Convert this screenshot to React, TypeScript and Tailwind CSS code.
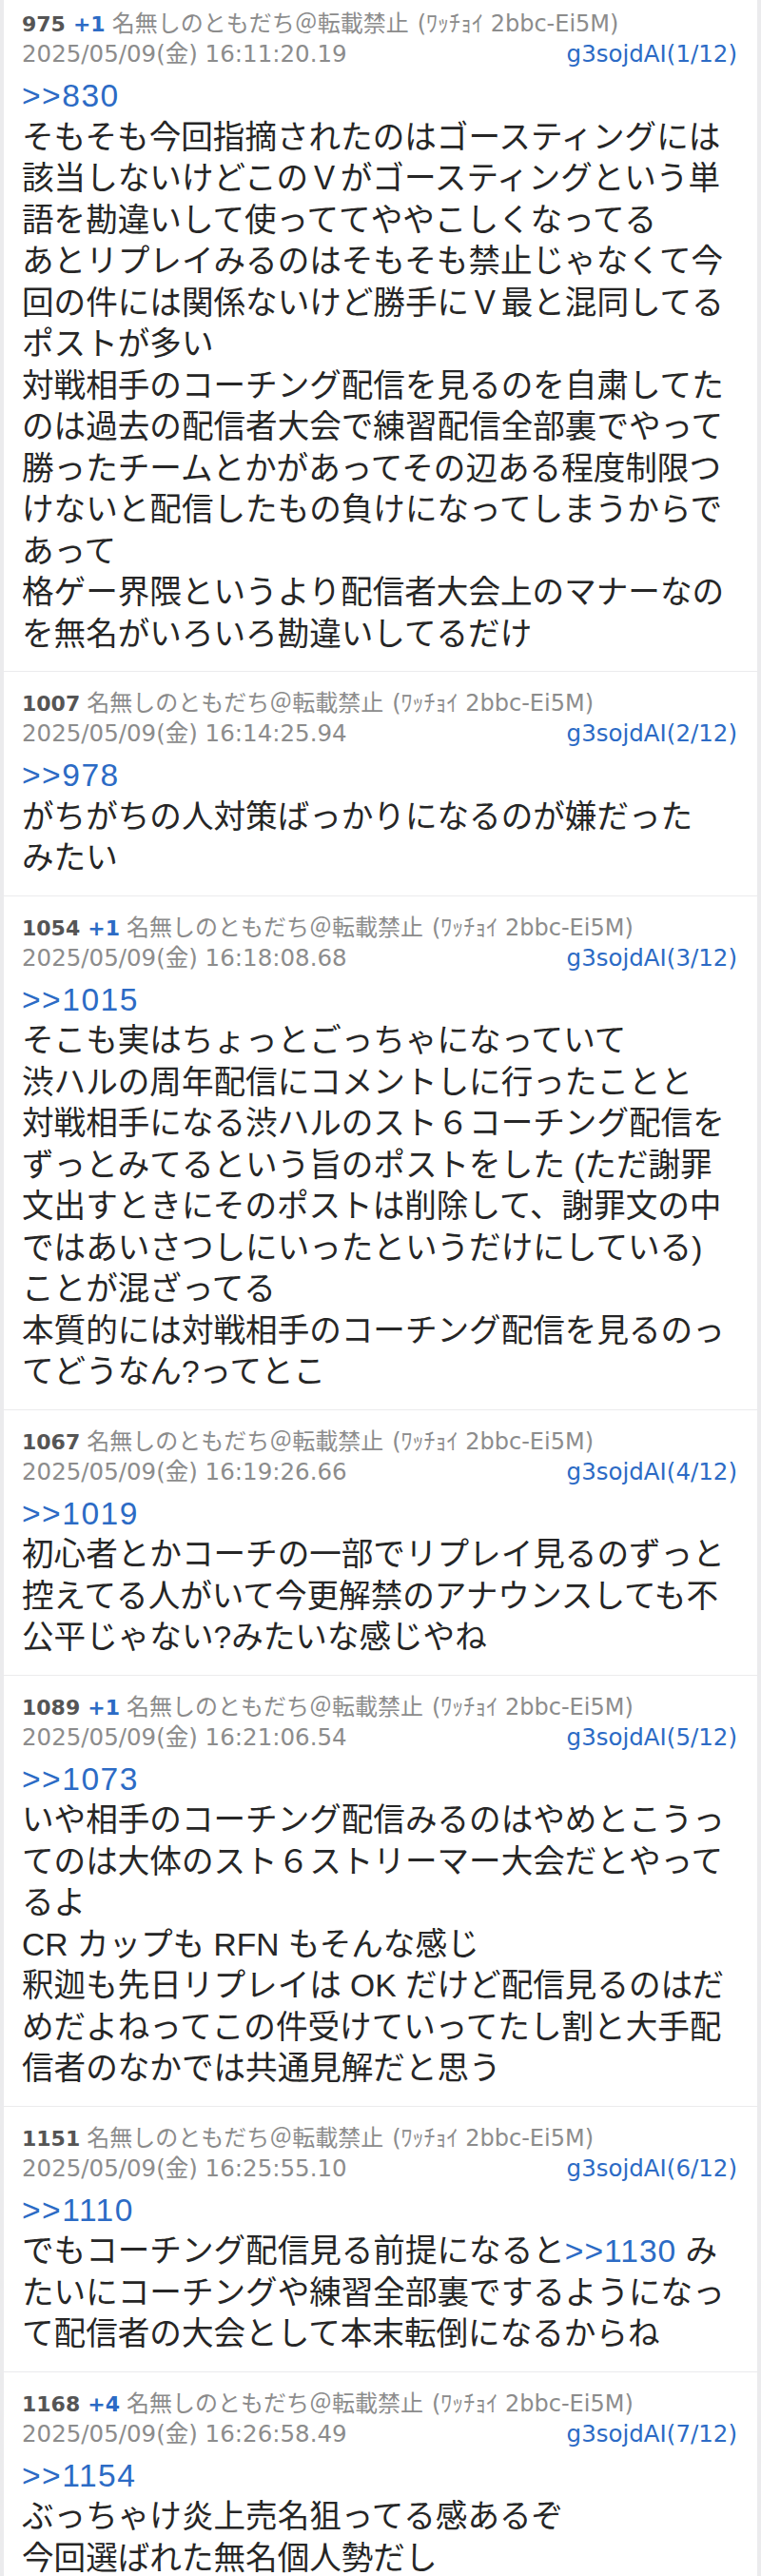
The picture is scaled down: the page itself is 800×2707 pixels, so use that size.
import React from "react";

type Post = {
  no: number;
  plus?: string;
  date: string;
  count: string;
  reply: string;
  lines: React.ReactNode[];
};

const link = "text-[#2c6bc5]";
const metaFont = { fontFamily: '"DejaVu Sans", "Noto Sans CJK JP", sans-serif' };

const posts: Post[] = [
  {
    no: 975,
    plus: "+1",
    date: "2025/05/09(金) 16:11:20.19",
    count: "1/12",
    reply: "830",
    lines: [
      "そもそも今回指摘されたのはゴースティングには",
      "該当しないけどこのＶがゴースティングという単",
      "語を勘違いして使っててややこしくなってる",
      "あとリプレイみるのはそもそも禁止じゃなくて今",
      "回の件には関係ないけど勝手にＶ最と混同してる",
      "ポストが多い",
      "対戦相手のコーチング配信を見るのを自粛してた",
      "のは過去の配信者大会で練習配信全部裏でやって",
      "勝ったチームとかがあってその辺ある程度制限つ",
      "けないと配信したもの負けになってしまうからで",
      "あって",
      "格ゲー界隈というより配信者大会上のマナーなの",
      "を無名がいろいろ勘違いしてるだけ",
    ],
  },
  {
    no: 1007,
    date: "2025/05/09(金) 16:14:25.94",
    count: "2/12",
    reply: "978",
    lines: ["がちがちの人対策ばっかりになるのが嫌だった", "みたい"],
  },
  {
    no: 1054,
    plus: "+1",
    date: "2025/05/09(金) 16:18:08.68",
    count: "3/12",
    reply: "1015",
    lines: [
      "そこも実はちょっとごっちゃになっていて",
      "渋ハルの周年配信にコメントしに行ったことと",
      "対戦相手になる渋ハルのスト６コーチング配信を",
      "ずっとみてるという旨のポストをした (ただ謝罪",
      "文出すときにそのポストは削除して、謝罪文の中",
      "ではあいさつしにいったというだけにしている)",
      "ことが混ざってる",
      "本質的には対戦相手のコーチング配信を見るのっ",
      "てどうなん?ってとこ",
    ],
  },
  {
    no: 1067,
    date: "2025/05/09(金) 16:19:26.66",
    count: "4/12",
    reply: "1019",
    lines: [
      "初心者とかコーチの一部でリプレイ見るのずっと",
      "控えてる人がいて今更解禁のアナウンスしても不",
      "公平じゃない?みたいな感じやね",
    ],
  },
  {
    no: 1089,
    plus: "+1",
    date: "2025/05/09(金) 16:21:06.54",
    count: "5/12",
    reply: "1073",
    lines: [
      "いや相手のコーチング配信みるのはやめとこうっ",
      "てのは大体のスト６ストリーマー大会だとやって",
      "るよ",
      "CR カップも RFN もそんな感じ",
      "釈迦も先日リプレイは OK だけど配信見るのはだ",
      "めだよねってこの件受けていってたし割と大手配",
      "信者のなかでは共通見解だと思う",
    ],
  },
  {
    no: 1151,
    date: "2025/05/09(金) 16:25:55.10",
    count: "6/12",
    reply: "1110",
    lines: [
      <>
        でもコーチング配信見る前提になると
        <span className={`${link} tracking-[1px]`}>&gt;&gt;1130</span> み
      </>,
      "たいにコーチングや練習全部裏でするようになっ",
      "て配信者の大会として本末転倒になるからね",
    ],
  },
  {
    no: 1168,
    plus: "+4",
    date: "2025/05/09(金) 16:26:58.49",
    count: "7/12",
    reply: "1154",
    lines: ["ぶっちゃけ炎上売名狙ってる感あるぞ", "今回選ばれた無名個人勢だし"],
  },
];

function PostCard({ post }: { post: Post }) {
  return (
    <div className="bg-white pt-[18px] pb-[17px] pl-[19px] pr-[21px]">
      <div
        className="whitespace-nowrap text-[24px] leading-[30px] text-[#8c8c8c]"
        style={metaFont}
      >
        <span className="text-[22px] font-bold text-[#555555]">{post.no}</span>
        {post.plus && (
          <span className={`ml-[8px] text-[22px] font-bold ${link}`}>{post.plus}</span>
        )}
        <span className="ml-[7px]">名無しのともだち＠転載禁止</span>
        <span className="ml-[9px]">(ﾜｯﾁｮｲ 2bbc-Ei5M)</span>
      </div>
      <div
        className="flex items-center justify-between whitespace-nowrap text-[24.5px] leading-[31px]"
        style={metaFont}
      >
        <span className="text-[#8c8c8c]">{post.date}</span>
        <span className={link}>g3sojdAI({post.count})</span>
      </div>
      <div className="mt-[7px] text-[33.6px] leading-[43.5px] text-[#262626]">
        <div className={`${link} tracking-[1.5px]`}>&gt;&gt;{post.reply}</div>
        {post.lines.map((line, i) => (
          <div key={i} className="whitespace-nowrap">
            {line}
          </div>
        ))}
      </div>
    </div>
  );
}

export default function App() {
  return (
    <div
      className="min-h-screen bg-[#ebebed] px-[4px]"
      style={{ fontFamily: '"Liberation Sans", "Noto Sans CJK JP", sans-serif' }}
    >
      <div className="-mt-[8px] flex flex-col gap-px">
        {posts.map((p) => (
          <PostCard key={p.no} post={p} />
        ))}
      </div>
    </div>
  );
}
